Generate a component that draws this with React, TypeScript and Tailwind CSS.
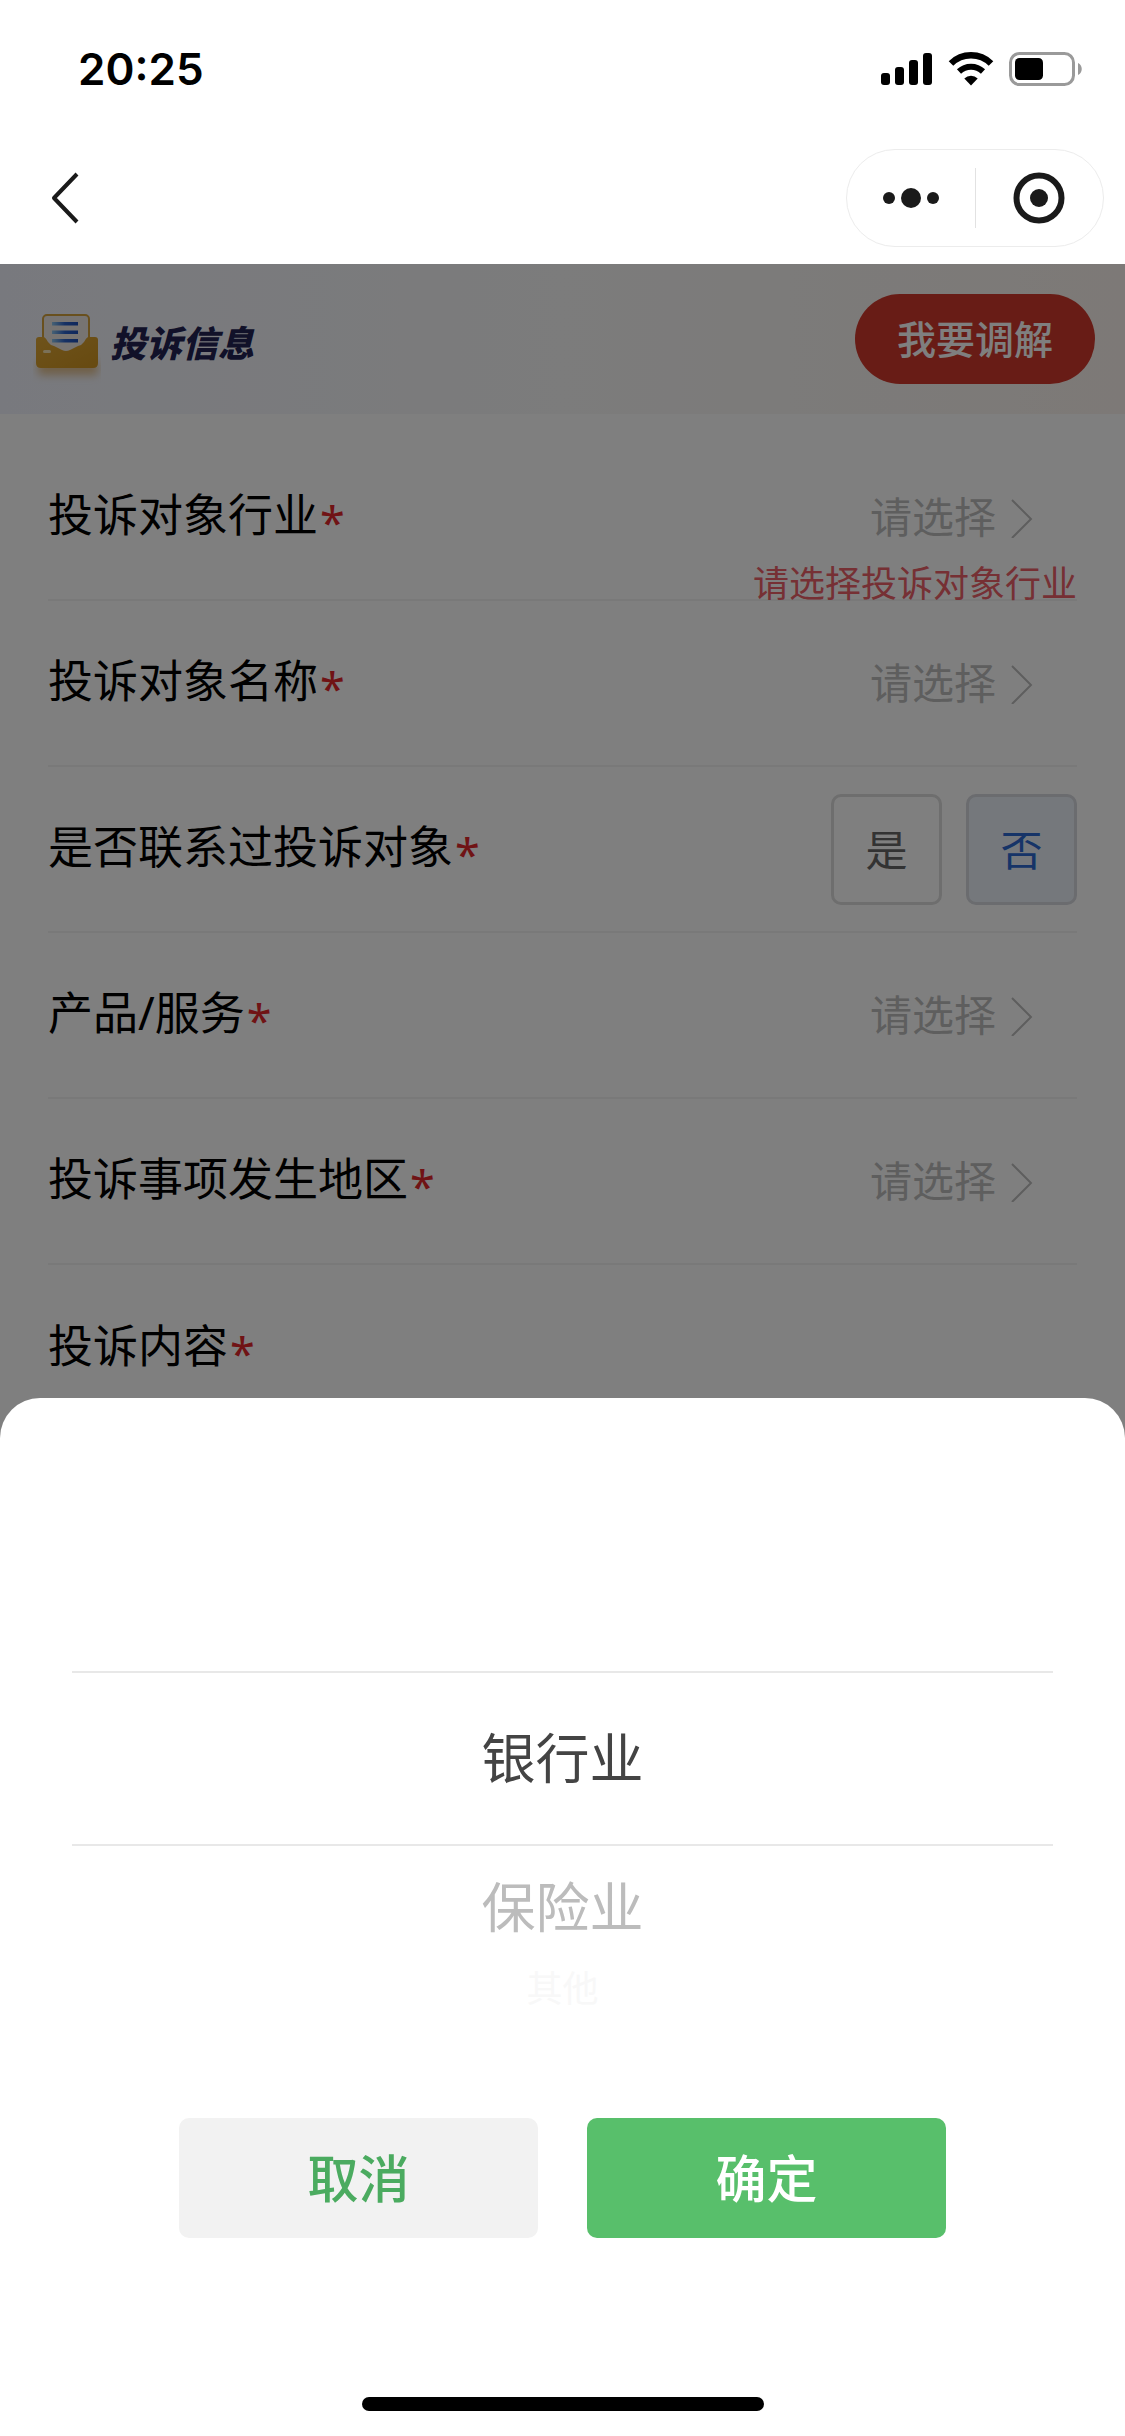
import type { ReactNode } from "react";

const fontStack = "font-['Noto_Sans','Noto_Sans_CJK_SC',sans-serif]";

function StatusBar() {
  return (
    <div className="flex h-[132px] items-start justify-between pt-[47px] pl-[78px] pr-[42px]">
      <time className="font-['Inter',sans-serif] text-[44px] leading-[45px] font-semibold text-black">20:25</time>
      <div className="flex items-center gap-[15px] pt-[5px]">
        <svg width="52" height="34" viewBox="0 0 52 34" aria-label="信号">
          <rect x="0" y="21" width="9" height="12" rx="3" />
          <rect x="14" y="15" width="9" height="18" rx="3" />
          <rect x="28" y="8" width="9" height="25" rx="3" />
          <rect x="42" y="1" width="9" height="32" rx="3" />
        </svg>
        <svg width="46" height="34" viewBox="0 0 46 34" aria-label="无线网络">
          <path d="M3 11.500a28.500 28.500 0 0 1 40 0" fill="none" stroke="#000" strokeWidth="6.500" />
          <path d="M11 19.500a17.500 17.500 0 0 1 24 0" fill="none" stroke="#000" strokeWidth="6" />
          <path d="M23 33.500l-6.700-6.900a9.500 9.500 0 0 1 13.400 0z" />
        </svg>
        <svg width="74" height="34" viewBox="0 0 74 34" aria-label="电量">
          <rect x="1.500" y="1.500" width="63" height="31" rx="9" fill="none" stroke="#9a9a9a" strokeWidth="3" />
          <rect x="6" y="6" width="28" height="22" rx="4.500" />
          <path d="M69 11c5 2 5 10 0 12z" fill="#9a9a9a" />
        </svg>
      </div>
    </div>
  );
}

function NavBar() {
  return (
    <div className="flex h-[132px] items-start justify-between pt-[17px] pl-[46px] pr-[21px]">
      <button type="button" aria-label="返回" className="flex h-[98px] w-[48px] items-center">
        <svg width="40" height="52" viewBox="0 0 40 52" fill="none" stroke="#1a1a1a" strokeWidth="4">
          <path d="M31 2L8 26L31 50" strokeLinejoin="round" />
        </svg>
      </button>
      <div className="flex h-[98px] w-[258px] items-center rounded-full border border-[#ececec]">
        <button type="button" aria-label="更多" className="flex h-full flex-1 items-center justify-center">
          <svg width="56" height="20" viewBox="0 0 56 20" fill="#1a1a1a">
            <circle cx="6" cy="10" r="6" />
            <circle cx="28" cy="10" r="10" />
            <circle cx="50" cy="10" r="6" />
          </svg>
        </button>
        <span className="h-[60px] w-px bg-[#e2e2e2]" />
        <button type="button" aria-label="关闭" className="flex h-full flex-1 items-center justify-center">
          <svg width="52" height="52" viewBox="0 0 52 52">
            <circle cx="26" cy="26" r="22.500" fill="none" stroke="#1a1a1a" strokeWidth="6" />
            <circle cx="26" cy="26" r="9" fill="#1a1a1a" />
          </svg>
        </button>
      </div>
    </div>
  );
}

function EnvelopeIcon() {
  return (
    <svg width="68" height="92" viewBox="0 -20 68 92" aria-hidden="true">
      <defs>
        <linearGradient id="flap" x1="0" y1="0" x2="1" y2="1">
          <stop offset="0" stopColor="#dda637" />
          <stop offset="1" stopColor="#cf9420" />
        </linearGradient>
        <linearGradient id="line" x1="0" y1="0" x2="1" y2="0">
          <stop offset="0" stopColor="#8fc4ea" />
          <stop offset="0.5" stopColor="#2c62c8" />
          <stop offset="1" stopColor="#2050b8" />
        </linearGradient>
        <filter id="soft" x="-20%" y="-60%" width="140%" height="260%">
          <feGaussianBlur stdDeviation="4" />
        </filter>
      </defs>
      <rect x="5" y="48" width="60" height="14" rx="4" fill="#d8a860" opacity="0.700" filter="url(#soft)" />
      <rect x="10" y="2" width="46" height="40" rx="4" fill="#efe8e4" stroke="#d3a03c" strokeWidth="2" />
      <g fill="url(#line)">
        <rect x="19" y="9" width="26" height="3.500" />
        <rect x="19" y="17.500" width="26" height="3.500" />
        <rect x="19" y="26" width="26" height="3.500" />
      </g>
      <path d="M3 27q0-3 3-3h5q2 1 4 5 2 3 6 4l8 4q4 2 8 0l8-4q4-1 6-4 2-4 4-5h7q3 0 3 3v23q0 5-5 5H8q-5 0-5-5z" fill="url(#flap)" />
      <rect x="10" y="37" width="8" height="3" rx="1.500" fill="#f6e3b0" />
    </svg>
  );
}

function Row({ label, error, last, children }: { label: string; error?: string; last?: boolean; children?: ReactNode }) {
  return (
    <div className={last ? "relative flex h-[166px] items-center justify-between" : "relative flex h-[166px] items-center justify-between border-b-2 border-[#f3f3f3]"}>
      <div className="flex items-start gap-[2px] pt-[4px] text-[45px] leading-[60px] text-black">
        <span>{label}</span>
        <span className="pt-[8px] text-[#e0262a]">*</span>
      </div>
      {children}
      {error && <p className="absolute right-0 bottom-[-9px] text-[36px] leading-[48px] text-[#ec6069]">{error}</p>}
    </div>
  );
}

function SelectButton({ label }: { label: string }) {
  return (
    <button type="button" aria-label={label} className="mr-[43px] flex items-center gap-[14px] text-[42px] leading-[60px] text-[#bdbdbd]">
      请选择
      <svg width="24" height="42" viewBox="0 0 24 42" fill="none" stroke="currentColor" strokeWidth="2">
        <path d="M2 4L21 23L2 42" />
      </svg>
    </button>
  );
}

export default function App() {
  return (
    <div className={`flex min-h-screen w-full flex-col bg-white ${fontStack}`}>
      <header>
        <StatusBar />
        <NavBar />
      </header>

      <main className="relative h-[1180px] overflow-hidden bg-white">
        <div className="flex h-[150px] items-center justify-between bg-linear-to-r from-[#f1f3fc] via-[#f8f8f8] to-[#faf3ee] pr-[30px] pl-[33px]">
          <h1 className="flex items-center gap-[9px] text-[36px] leading-[54px] font-black text-[#232352] italic">
            <EnvelopeIcon />
            <span className="mt-[10px]">投诉信息</span>
          </h1>
          <button type="button" className="h-[90px] w-[240px] rounded-full bg-[#d0382c] text-[39px] font-medium text-white">
            我要调解
          </button>
        </div>
        <div className="px-[48px] pt-[21px]">
          <Row label="投诉对象行业" error="请选择投诉对象行业">
            <SelectButton label="投诉对象行业" />
          </Row>
          <Row label="投诉对象名称">
            <SelectButton label="投诉对象名称" />
          </Row>
          <Row label="是否联系过投诉对象">
            <div className="flex gap-[24px] text-[42px]">
              <button type="button" className="h-[111px] w-[111px] rounded-[10px] border-3 border-[#dcdcdc] text-[#666666]">
                是
              </button>
              <button type="button" aria-pressed="true" className="h-[111px] w-[111px] rounded-[10px] border-3 border-[#d6d8de] bg-[#ebf1f9] text-[#2c68d0]">
                否
              </button>
            </div>
          </Row>
          <Row label="产品/服务">
            <SelectButton label="产品/服务" />
          </Row>
          <Row label="投诉事项发生地区">
            <SelectButton label="投诉事项发生地区" />
          </Row>
          <Row label="投诉内容" last />
        </div>
        <div className="absolute inset-0 bg-black/50" />
      </main>

      <section role="dialog" aria-label="选择行业" className="relative z-10 -mt-[46px] flex flex-1 flex-col items-center rounded-t-[40px] bg-white px-[72px] pt-[273px] pb-[25px]">
        <ul role="listbox" className="w-full text-center text-[54px]">
          <li role="option" aria-selected="true" className="flex h-[175px] items-center justify-center border-y-2 border-[#e8e8e8] text-[#444444]">
            银行业
          </li>
          <li role="option" aria-selected="false" className="flex h-[122px] items-center justify-center text-[#bcbcbc]">
            保险业
          </li>
          <li role="option" aria-selected="false" className="h-[42px] text-[36px] leading-[42px] text-[#f8f8f8]">
            其他
          </li>
        </ul>
        <div className="mt-[108px] flex w-full justify-center gap-[49px] text-[51px] font-medium">
          <button type="button" className="h-[120px] w-[359px] rounded-[10px] bg-[#f2f2f2] text-[#4bab60]">
            取消
          </button>
          <button type="button" className="h-[120px] w-[359px] rounded-[10px] bg-[#58bf6b] text-white">
            确定
          </button>
        </div>
        <div className="mt-auto h-[14px] w-[402px] rounded-full bg-black" />
      </section>
    </div>
  );
}
